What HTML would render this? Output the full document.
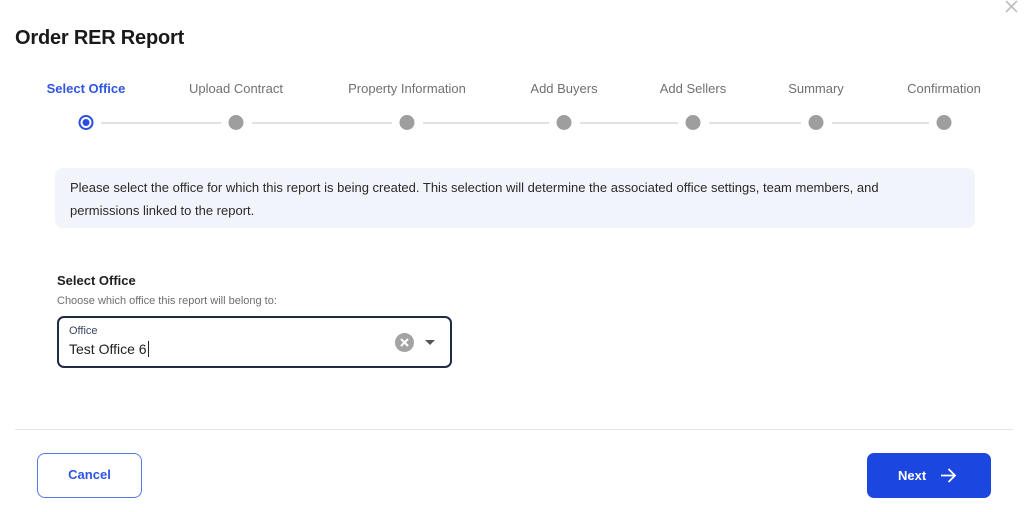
<!DOCTYPE html>
<html><head><meta charset="utf-8"><style>
*{margin:0;padding:0;box-sizing:border-box}
body{width:1024px;height:512px;background:#fff;font-family:"Liberation Sans",sans-serif;position:relative;overflow:hidden;color:#222}
.a{position:absolute}
.lbl{position:absolute;top:81px;font-size:13px;color:#707070;transform:translateX(-50%);white-space:nowrap}
.dot{position:absolute;top:115px;width:15px;height:15px;border-radius:50%;background:#9e9e9e;transform:translateX(-50%)}
.ln{position:absolute;top:122px;height:2px;background:#e2e2e2}
</style></head><body>
<svg class="a" style="left:1004px;top:0px" width="14" height="14" viewBox="0 0 14 14"><path d="M2 1L13 12M13 1L2 12" stroke="#bdbdbd" stroke-width="1.6"/></svg>
<div class="a" style="left:15px;top:27px;font-size:20px;font-weight:bold;color:#1a1a1a;letter-spacing:-0.2px">Order RER Report</div>

<div class="lbl" style="left:86px;color:#2f55e4;font-weight:bold">Select Office</div>
<div class="lbl" style="left:236px">Upload Contract</div>
<div class="lbl" style="left:407px">Property Information</div>
<div class="lbl" style="left:564px">Add Buyers</div>
<div class="lbl" style="left:693px">Add Sellers</div>
<div class="lbl" style="left:816px">Summary</div>
<div class="lbl" style="left:944px">Confirmation</div>

<div class="ln" style="left:101px;width:120px"></div>
<div class="ln" style="left:252px;width:140px"></div>
<div class="ln" style="left:423px;width:126px"></div>
<div class="ln" style="left:580px;width:98px"></div>
<div class="ln" style="left:709px;width:92px"></div>
<div class="ln" style="left:832px;width:97px"></div>

<div class="dot" style="left:86px;background:#fff;border:2px solid #2a4fe0"><div style="position:absolute;left:2px;top:2px;width:7px;height:7px;border-radius:50%;background:#2a4fe0"></div></div>
<div class="dot" style="left:236px"></div>
<div class="dot" style="left:407px"></div>
<div class="dot" style="left:564px"></div>
<div class="dot" style="left:693px"></div>
<div class="dot" style="left:816px"></div>
<div class="dot" style="left:944px"></div>

<div class="a" style="left:55px;top:168px;width:920px;height:60px;background:#f1f4fb;border-radius:8px;padding:8px 15px;font-size:13px;line-height:23px;color:#2a2a2a"><div style="width:850px">Please select the office for which this report is being created. This selection will determine the associated office settings, team members, and permissions linked to the report.</div></div>

<div class="a" style="left:57px;top:273px;font-size:13px;font-weight:bold;color:#1e1e1e">Select Office</div>
<div class="a" style="left:57px;top:295px;font-size:11px;color:#6e6e6e">Choose which office this report will belong to:</div>
<div class="a" style="left:57px;top:316px;width:395px;height:52px;border:2px solid #1f2a44;border-radius:7px">
 <div class="a" style="left:10px;top:7px;font-size:11px;color:#3a4560">Office</div>
 <div class="a" style="left:10px;top:23px;font-size:14px;color:#222">Test Office 6<span style="border-left:1px solid #222;margin-left:1px"></span></div>
 <div class="a" style="left:336px;top:15px;width:19px;height:19px;border-radius:50%;background:#a3a3a3"><svg width="19" height="19" viewBox="0 0 19 19"><path d="M6 6L13 13M13 6L6 13" stroke="#fff" stroke-width="2"/></svg></div>
 <div class="a" style="left:366px;top:22px;width:0;height:0;border-left:5px solid transparent;border-right:5px solid transparent;border-top:5px solid #555"></div>
</div>

<div class="a" style="left:15px;top:429px;width:998px;height:1px;background:#e6e6e6"></div>
<div class="a" style="left:37px;top:453px;width:105px;height:45px;border:1.5px solid #5a78e8;border-radius:8px;text-align:center;line-height:42px;font-size:13px;font-weight:bold;color:#2f55e4">Cancel</div>
<div class="a" style="left:867px;top:453px;width:124px;height:45px;background:#1c46e0;border-radius:7px;color:#fff;font-size:13px;font-weight:bold">
 <span class="a" style="left:31px;top:15px">Next</span>
 <svg class="a" style="left:72px;top:14px" width="18" height="17" viewBox="0 0 18 17"><path d="M2 8.5H16M9.5 2L16 8.5L9.5 15" stroke="#fff" stroke-width="1.8" fill="none"/></svg>
</div>
</body></html>
